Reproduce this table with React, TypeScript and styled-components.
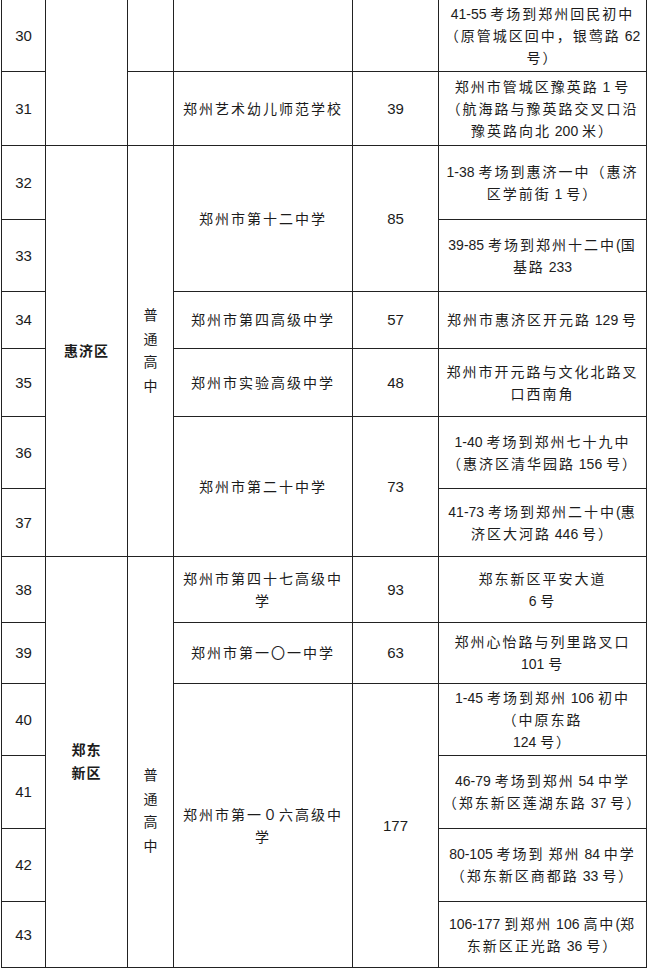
import React from 'react';
import styled, { createGlobalStyle } from 'styled-components';

const GlobalStyle = createGlobalStyle`
  body {
    margin: 0;
    background: #ffffff;
  }
`;

// latin runs (digits, dashes, brackets) are set tight, CJK gets the wide spacing
const Mixed = ({ text }: { text: string }) => (
  <>
    {text.split(/([\x20-\x7e]+)/).map((part, i) =>
      /[\x20-\x7e]/.test(part) ? <Latin key={i}>{part}</Latin> : part
    )}
  </>
);

const Address = ({ lines }: { lines: string[] }) => (
  <AddrCell>
    {lines.map((l, i) => (
      <AddrLine key={i}>
        <Mixed text={l} />
      </AddrLine>
    ))}
  </AddrCell>
);

const Vertical = ({ text }: { text: string }) => (
  <VerticalText>
    {text.split('').map((c, i) => (
      <span key={i}>{c}</span>
    ))}
  </VerticalText>
);

const App = () => {
  return (
    <>
      <GlobalStyle />
      <Page>
        <Table>
          <colgroup>
            <col style={{ width: 44 }} />
            <col style={{ width: 82 }} />
            <col style={{ width: 46 }} />
            <col style={{ width: 179 }} />
            <col style={{ width: 86 }} />
            <col style={{ width: 208 }} />
          </colgroup>
          <tbody>
            <Row h={72}>
              <NumCell>30</NumCell>
              <DistrictCell rowSpan={2} />
              <Cell />
              <Cell />
              <Cell />
              <Address lines={['41-55 考场到郑州回民初中', '（原管城区回中，银莺路 62', '号）']} />
            </Row>
            <Row h={74}>
              <NumCell>31</NumCell>
              <Cell />
              <NameCell>郑州艺术幼儿师范学校</NameCell>
              <CountCell>39</CountCell>
              <Address lines={['郑州市管城区豫英路 1 号', '（航海路与豫英路交叉口沿', '豫英路向北 200 米）']} />
            </Row>

            <Row h={74}>
              <NumCell>32</NumCell>
              <DistrictCell rowSpan={6}>惠济区</DistrictCell>
              <TypeCell rowSpan={6}>
                <Vertical text="普通高中" />
              </TypeCell>
              <NameCell rowSpan={2}>郑州市第十二中学</NameCell>
              <CountCell rowSpan={2}>85</CountCell>
              <Address lines={['1-38 考场到惠济一中（惠济', '区学前街 1 号）']} />
            </Row>
            <Row h={72}>
              <NumCell>33</NumCell>
              <Address lines={['39-85 考场到郑州十二中(国', '基路 233']} />
            </Row>
            <Row h={57}>
              <NumCell>34</NumCell>
              <NameCell>郑州市第四高级中学</NameCell>
              <CountCell>57</CountCell>
              <Address lines={['郑州市惠济区开元路 129 号']} />
            </Row>
            <Row h={68}>
              <NumCell>35</NumCell>
              <NameCell>郑州市实验高级中学</NameCell>
              <CountCell>48</CountCell>
              <Address lines={['郑州市开元路与文化北路叉', '口西南角']} />
            </Row>
            <Row h={72}>
              <NumCell>36</NumCell>
              <NameCell rowSpan={2}>郑州市第二十中学</NameCell>
              <CountCell rowSpan={2}>73</CountCell>
              <Address lines={['1-40 考场到郑州七十九中', '（惠济区清华园路 156 号）']} />
            </Row>
            <Row h={68}>
              <NumCell>37</NumCell>
              <Address lines={['41-73 考场到郑州二十中(惠', '济区大河路 446 号）']} />
            </Row>

            <Row h={66}>
              <NumCell>38</NumCell>
              <DistrictCell rowSpan={6}>
                郑东
                <br />
                新区
              </DistrictCell>
              <TypeCell rowSpan={6} shift={98}>
                <Vertical text="普通高中" />
              </TypeCell>
              <NameCell>郑州市第四十七高级中学</NameCell>
              <CountCell>93</CountCell>
              <Address lines={['郑东新区平安大道', '6 号']} />
            </Row>
            <Row h={61}>
              <NumCell>39</NumCell>
              <NameCell>郑州市第一〇一中学</NameCell>
              <CountCell>63</CountCell>
              <Address lines={['郑州心怡路与列里路叉口', '101 号']} />
            </Row>
            <Row h={72}>
              <NumCell>40</NumCell>
              <NameCell rowSpan={4}>郑州市第一０六高级中学</NameCell>
              <CountCell rowSpan={4}>177</CountCell>
              <Address lines={['1-45 考场到郑州 106 初中', '（中原东路', '124 号）']} />
            </Row>
            <Row h={73}>
              <NumCell>41</NumCell>
              <Address lines={['46-79 考场到郑州 54 中学', '（郑东新区莲湖东路 37 号）']} />
            </Row>
            <Row h={73}>
              <NumCell>42</NumCell>
              <Address lines={['80-105 考场到 郑州 84 中学', '（郑东新区商都路 33 号）']} />
            </Row>
            <Row h={66}>
              <NumCell>43</NumCell>
              <Address lines={['106-177 到郑州 106 高中(郑', '东新区正光路 36 号）']} />
            </Row>
          </tbody>
        </Table>
      </Page>
    </>
  );
};

export default App;

const Page = styled.div`
  padding: 0 0 0 1px;
  margin-top: -1px;
  width: 646px;
  background: #ffffff;
`;

const Table = styled.table`
  border-collapse: collapse;
  table-layout: fixed;
  width: 645px;
  font-family: 'Liberation Sans Narrow', 'Liberation Sans', 'Noto Sans CJK SC', sans-serif;
  font-size: 14px;
  color: #1c1c1c;
`;

const Row = styled.tr<{ h: number }>`
  height: ${({ h }) => h}px;
`;

const Cell = styled.td`
  border: 1px solid #222222;
  padding: 0 6px;
  text-align: center;
  vertical-align: middle;
  line-height: 22px;
  letter-spacing: 2px;
`;

const Latin = styled.span`
  letter-spacing: 0;
`;

const NumCell = styled(Cell)`
  padding: 0;
  letter-spacing: 0;
  font-size: 15px;
`;

const DistrictCell = styled(Cell)`
  font-weight: 700;
  letter-spacing: 1px;
  line-height: 23px;
  font-size: 14px;
`;

const TypeCell = styled(Cell)<{ shift?: number }>`
  padding: ${({ shift }) => shift ?? 0}px 0 0 0;
`;

const VerticalText = styled.div`
  display: flex;
  flex-direction: column;
  align-items: center;
  line-height: 23.5px;
  letter-spacing: 0;
`;

const NameCell = styled(Cell)`
  padding: 0 8px;
`;

const CountCell = styled(Cell)`
  letter-spacing: 0;
  font-size: 15px;
`;

const AddrCell = styled(Cell)`
  padding: 0 2px;
`;

const AddrLine = styled.span`
  display: block;
  white-space: nowrap;
`;
